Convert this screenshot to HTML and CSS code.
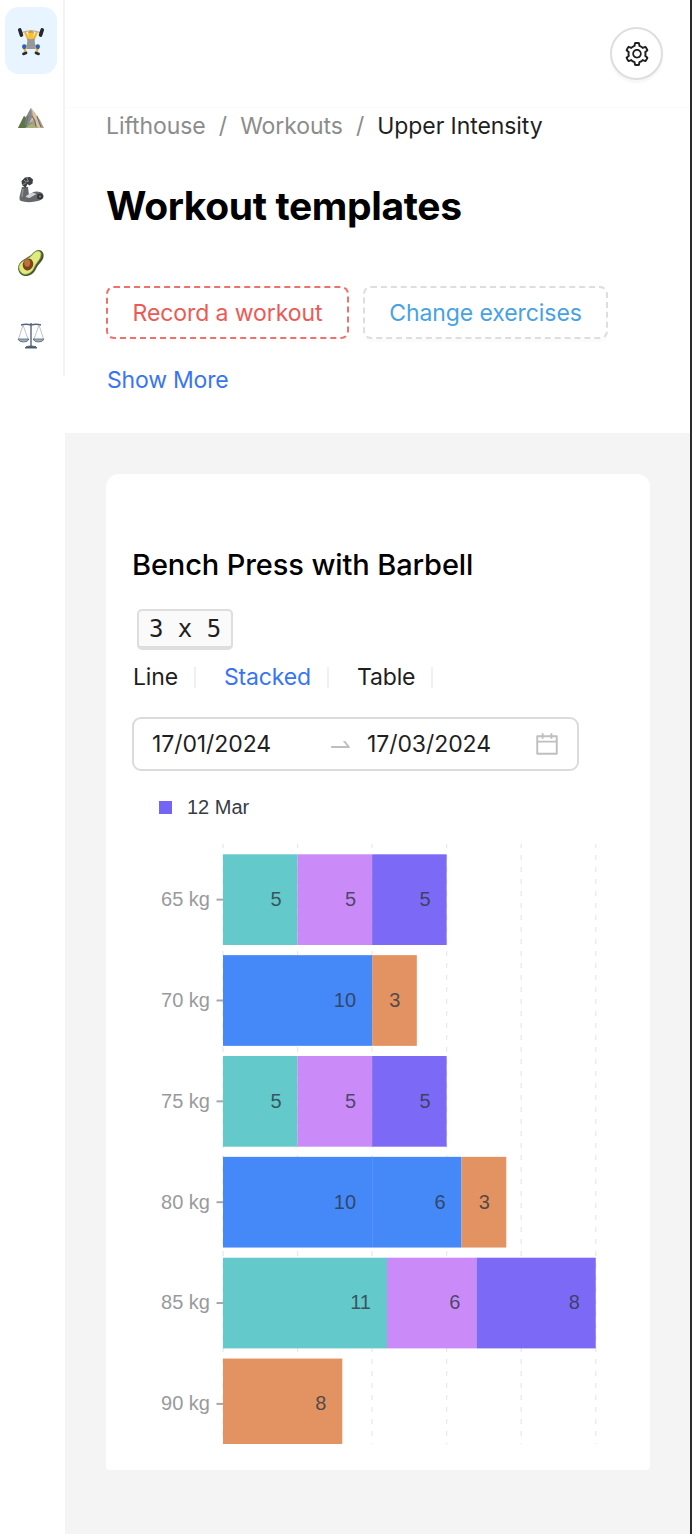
FILE: index.html
```html
<!DOCTYPE html>
<html lang="en">
<head>
<meta charset="utf-8">
<title>Lifthouse – Workout templates</title>
<link rel="stylesheet" href="styles.css">
</head>
<body>
<div class="app">
  <nav class="sidebar">
    <a class="nav-item active"><svg width="28" height="30" viewBox="0 0 28 30">
      <path d="M5 6.500Q14 3 23 6.500" fill="none" stroke="#a3a7ab" stroke-width="1.100"/>
      <path d="M8 6l3.500 8M20 6l-3.500 8" stroke="#f3b630" stroke-width="2.200"/>
      <path d="M11 19l-4 2 1.500 5M17 19l4 2-1.500 5" fill="none" stroke="#eeb02d" stroke-width="2.400"/>
      <path d="M10.500 12.500h7l.5 6 .8 4.500h-9.600l.8-4.500z" fill="#96989c"/>
      <path d="M7.200 20.300v.8M20.800 20.300v.8" stroke="#2e62ae" stroke-width="4.200" stroke-linecap="round"/>
      <rect x="11.300" y="5" width="5.400" height="8.300" rx="2.500" fill="#f7c136"/><path d="M11.300 7.500q0-3 2.700-3t2.700 3q-2.700-1.300-5.400 0z" fill="#d59a2b"/>
      <rect x="1.800" y="2" width="3.600" height="9" rx="1.700" fill="#26282c" transform="rotate(-18 3.500 6.500)"/><rect x="22.600" y="2" width="3.600" height="9" rx="1.700" fill="#26282c" transform="rotate(18 24.500 6.500)"/>
      <path d="M9 27l-2.500.8M19 27l2.500.8" stroke="#292b30" stroke-width="2.800" stroke-linecap="round"/>
    </svg></a>
    <a class="nav-item peak"><svg width="28" height="24" viewBox="0 0 28 24">
      <path d="M1 21L5 13l2-4 2 1 5-9 4 5 2 3 3 4 4 8z" fill="#b09e84"/>
      <path d="M14 1l-5 9-4 11h9l1-9z" fill="#838a8f"/>
      <path d="M14 1l2 7-4 9 5-5 4 9h3L20 9z" fill="#d8c3a0"/>
      <path d="M15 9l3 5 1 7M20 9l2 6 2 5M11 9l-2 9" fill="none" stroke="#6a6e72" stroke-width="1.100"/>
      <path d="M1 21l4-8 2-4 2 2-1 7 6 3z" fill="#5b7548"/><path d="M8 21l6-4 4 2 4 2z" fill="#a8b272"/>
    </svg></a>
    <a class="nav-item low"><svg width="28" height="28" viewBox="0 0 28 28">
      <path d="M5 11h6l1 8q5-5 11-3 4 1 3.500 5.500Q24 25 18 25.500q-8 1.500-14-.5-2-1-1.500-4z" fill="#65676a"/>
      <path d="M5 9L4.500 5 8 1.500 13 1l3 2.500-.5 4-3 2-2-1.500-2 4z" fill="#3e4043"/><path d="M7 4l2 2 3-1M10 2l1 3M5 9l4-2" stroke="#8c8e91" stroke-width="1" fill="none"/>
      <path d="M6 13l-1 8" stroke="#8e9092" stroke-width="1.500"/>
      <path d="M8.500 21q5-6 11-3l-7 4z" fill="#d4d5d6"/><circle cx="23" cy="20.500" r="3" fill="#34363a"/><circle cx="23" cy="20.500" r="1" fill="#888"/>
    </svg></a>
    <a class="nav-item low"><svg width="28" height="28" viewBox="0 0 28 28">
      <path d="M1 19C2 10 11 10 16 4c4-4 9-4 10.500 1 1 7-5 9-7.500 15-4 9-17 10-18-1z" fill="#485638"/>
      <path d="M1.800 18C3 11 12 11 16 5c4-5 8-3 8 0 0 6-5 8-7 14-4 8-14 9-15.200-1z" fill="#e1ea80" stroke="#91b63c" stroke-width=".8"/>
      <ellipse cx="11" cy="15.500" rx="5.200" ry="6" fill="#7e421c" transform="rotate(20 11 15.500)"/><ellipse cx="10.200" cy="14" rx="3" ry="3.700" fill="#bd713d"/>
    </svg></a>
    <a class="nav-item low"><svg width="28" height="28" viewBox="0 0 28 28" fill="none" stroke="#536579">
      <path d="M4 3Q9 1.500 14 3q5-1.500 10 0M14 1v24" stroke-width="1.400"/><path d="M6 3L1.500 17M6 3l5 14M22 3l-5 14M22 3l4.500 14" stroke="#9daab6" stroke-width=".7"/>
      <path d="M1 17h11q-1 3-5.500 3T1 17zM16 17h11q-1 3-5.500 3T16 17z" fill="#9eb0c1" stroke-width=".8"/><path d="M8 26q0-2 6-2t6 2z" fill="#425262"/>
    </svg></a>
  </nav>
  <main class="main">
    <header class="header">
      <div class="toolbar"><button class="settings" aria-label="Settings"><svg width="24" height="24" viewBox="64 64 896 896" fill="currentColor"><path d="M924.800 625.700l-65.500-56c3.100-19 4.700-38.400 4.700-57.800s-1.600-38.800-4.700-57.800l65.500-56a32.030 32.030 0 009.300-35.200l-.9-2.600a443.740 443.740 0 00-79.700-137.900l-1.800-2.100a32.120 32.120 0 00-35.100-9.500l-81.300 28.900c-30-24.600-63.500-44-99.700-57.600l-15.700-85a32.050 32.050 0 00-25.800-25.700l-2.700-.5c-52.100-9.400-106.900-9.400-159 0l-2.700.5a32.050 32.050 0 00-25.800 25.700l-15.800 85.400a351.860 351.860 0 00-99 57.400l-81.900-29.100a32 32 0 00-35.100 9.500l-1.800 2.100a446.020 446.020 0 00-79.700 137.900l-.9 2.600c-4.500 12.500-.8 26.500 9.300 35.200l66.300 56.600c-3.100 18.800-4.600 38-4.600 57.100 0 19.200 1.500 38.400 4.600 57.100L99 625.500a32.030 32.030 0 00-9.300 35.200l.9 2.600c18.100 50.400 44.900 96.900 79.700 137.900l1.800 2.100a32.120 32.120 0 0035.100 9.500l81.900-29.100c29.800 24.500 63.100 43.900 99 57.400l15.800 85.400a32.050 32.050 0 0025.800 25.700l2.700.5a449.400 449.400 0 00159 0l2.700-.5a32.050 32.050 0 0025.800-25.700l15.700-85a350 350 0 0099.700-57.600l81.300 28.900a32 32 0 0035.100-9.500l1.800-2.100c34.800-41.100 61.600-87.500 79.700-137.900l.9-2.600c4.500-12.300.8-26.300-9.300-35zM788.300 465.900c2.500 15.100 3.800 30.600 3.800 46.100s-1.300 31-3.800 46.100l-6.600 40.100 74.700 63.900a370.030 370.030 0 01-42.600 73.600L721 702.800l-31.400 25.800c-23.900 19.600-50.500 35-79.300 45.800l-38.100 14.300-17.900 97a377.500 377.500 0 01-85 0l-17.900-97.200-37.800-14.500c-28.500-10.800-55-26.200-78.700-45.700l-31.400-25.900-93.400 33.200c-17-22.900-31.200-47.600-42.600-73.600l75.500-64.500-6.500-40c-2.400-14.900-3.700-30.300-3.700-45.500 0-15.300 1.200-30.600 3.700-45.500l6.500-40-75.500-64.500c11.300-26.100 25.600-50.700 42.600-73.600l93.400 33.200 31.400-25.900c23.700-19.500 50.200-34.900 78.700-45.700l37.900-14.300 17.900-97.200c28.100-3.200 56.800-3.200 85 0l17.900 97 38.100 14.300c28.700 10.800 55.400 26.200 79.300 45.800l31.400 25.800 92.800-32.900c17 22.900 31.200 47.600 42.600 73.600L781.800 426l6.500 39.900zM512 326c-97.200 0-176 78.800-176 176s78.800 176 176 176 176-78.800 176-176-78.800-176-176-176zm79.200 255.200A111.600 111.600 0 01512 614c-29.900 0-58-11.700-79.200-32.800A111.600 111.600 0 01400 502c0-29.900 11.700-58 32.800-79.200C454 401.600 482.100 390 512 390c29.900 0 58 11.600 79.200 32.800A111.600 111.600 0 01624 502c0 29.900-11.700 58-32.800 79.200z"/></svg></button></div>
      <div class="breadcrumb"><span>Lifthouse</span><i>/</i><span>Workouts</span><i>/</i><span class="current">Upper Intensity</span></div>
      <h1 class="title">Workout templates</h1>
      <div class="actions"><button class="btn danger">Record a workout</button><button class="btn info">Change exercises</button></div>
      <a class="more">Show More</a>
    </header>
    <section class="content">
      <article class="card">
        <h2 class="exercise">Bench Press with Barbell</h2>
        <kbd class="sets">3 x 5</kbd>
        <div class="tabs"><a>Line</a><hr><a class="selected">Stacked</a><hr><a>Table</a><hr></div>
        <div class="range"><span class="date">17/01/2024</span><svg class="arrow" width="23" height="23" viewBox="64 64 896 896"><path fill="currentColor" d="M873.100 596.200l-164-208A32 32 0 00684 376h-64.800c-6.700 0-10.400 7.700-6.300 13l144.300 183H152c-4.400 0-8 3.600-8 8v60c0 4.400 3.600 8 8 8h695.900c26.800 0 41.700-30.800 25.200-51.800z"/></svg><span class="date end">17/03/2024</span><svg class="calendar" width="24" height="24" viewBox="64 64 896 896"><path fill="currentColor" d="M880 184H712v-64c0-4.400-3.600-8-8-8h-56c-4.400 0-8 3.600-8 8v64H384v-64c0-4.400-3.600-8-8-8h-56c-4.400 0-8 3.600-8 8v64H144c-17.700 0-32 14.300-32 32v664c0 17.700 14.300 32 32 32h736c17.700 0 32-14.300 32-32V216c0-17.700-14.300-32-32-32zm-40 656H184V460h656v380zM184 392V256h128v48c0 4.400 3.600 8 8 8h56c4.400 0 8-3.600 8-8v-48h256v48c0 4.400 3.600 8 8 8h56c4.400 0 8-3.600 8-8v-48h128v136H184z"/></svg></div>
        <div class="legend"><b class="swatch"></b><span>12 Mar</span></div>
        <svg class="chart" id="chart" width="491" height="604" viewBox="132 840 491 604"></svg>
      </article>
    </section>
  </main>
</div>
<script src="chart.js"></script>
</body>
</html>
```
FILE: chart.js
```js
const NS = 'http://www.w3.org/2000/svg';
const chart = document.getElementById('chart');
const colors = { teal: '#63c9ca', pink: '#ca8af8', violet: '#7c6af6', blue: '#4588f7', orange: '#e39362' };
const rows = [
  ['65 kg', [[5, 'teal'], [5, 'pink'], [5, 'violet']]],
  ['70 kg', [[10, 'blue'], [3, 'orange']]],
  ['75 kg', [[5, 'teal'], [5, 'pink'], [5, 'violet']]],
  ['80 kg', [[10, 'blue'], [6, 'blue'], [3, 'orange']]],
  ['85 kg', [[11, 'teal'], [6, 'pink'], [8, 'violet']]],
  ['90 kg', [[8, 'orange']]]
];
const left = 223, unit = 14.91, top0 = 854.3, pitch = 100.85, barHeight = 90.7;

function add(tag, attrs, text) {
  const el = document.createElementNS(NS, tag);
  for (const key in attrs) el.setAttribute(key, attrs[key]);
  if (text !== undefined) el.textContent = text;
  chart.appendChild(el);
}

for (let v = 0; v <= 25; v += 5) {
  const x = left + v * unit;
  add('line', { x1: x, x2: x, y1: 1444, y2: 844, class: 'grid' });
}
rows.forEach(([label, values], i) => {
  const y = top0 + i * pitch;
  const mid = y + barHeight / 2;
  let x = left;
  add('text', { x: 210, y: mid + 6.3, class: 'axis-label' }, label);
  add('line', { x1: 216.5, x2: 223, y1: mid, y2: mid, class: 'tick' });
  values.forEach(([value, color]) => {
    const w = value * unit;
    add('rect', { x, y, width: w, height: barHeight, fill: colors[color] });
    add('text', { x: value === 3 ? x + w / 2 + 6 : x + w - 16, y: mid + 6.3, class: 'value' }, value);
    x += w;
  });
});
```
FILE: styles.css
```css
* { box-sizing: border-box; }
body { margin: 0; background: #fff; font-family: Inter, "Noto Sans", sans-serif; color: #1f1f1f; font-size: 23px; letter-spacing: -.08px; }
button { font: inherit; letter-spacing: inherit; background: #fff; padding: 0; }
svg { display: block; flex: none; }
.app { display: flex; width: 692px; height: 1534px; border-right: 2px solid #292b2d; overflow: hidden; }
.sidebar { width: 65px; height: 376px; flex: none; border-right: 2px solid #f3f3f3; padding: 7px 6px 0 5px; }
.nav-item { display: flex; align-items: center; justify-content: center; width: 52px; height: 67px; margin-bottom: 6px; border-radius: 14px; }
.active { background: #e8f4ff; }
.peak { padding-top: 11px; }
.low { padding-top: 7px; }
.main { flex: 1; min-width: 0; }
.header { height: 433px; padding: 0 27px 0 41px; display: flex; flex-direction: column; align-items: flex-start; }
.toolbar { height: 108px; align-self: stretch; display: flex; justify-content: flex-end; padding-top: 27px; border-bottom: 1px solid #fbfbfb; margin-left: -41px; margin-right: -27px; padding-right: 27px; }
.settings { width: 53px; height: 53px; border: 2px solid #dedede; border-radius: 50%; display: flex; align-items: center; justify-content: center; box-shadow: 0 3px 2px #f7f7f7; color: #1f1f1f; }
.breadcrumb { display: flex; line-height: 36px; color: #8c8c8c; white-space: nowrap; }
.breadcrumb i { font-style: normal; width: 34.500px; text-align: center; }
.breadcrumb .current { color: #1f1f1f; }
.title { margin: 35px 0 0; font-size: 39px; line-height: 54px; font-weight: 700; letter-spacing: -.370px; color: #000; white-space: nowrap; }
.actions { display: flex; gap: 14px; margin-top: 53px; }
.btn { width: 243px; height: 53px; border: 2px dashed #f0706b; border-radius: 8px; white-space: nowrap; box-shadow: 0 3px 0 #fbfbfb; }
.danger { color: #ed5a55; }
.info { width: 245px; color: #47a2e4; border-color: #dedede; }
.more { margin: 23px 0 0 1px; line-height: 36px; color: #3875f6; letter-spacing: -.2px; }
.content { height: 1101px; background: #f4f4f4; padding: 41px 40px 0 41px; }
.card { height: 996px; background: #fff; border-radius: 13px 13px 4px 4px; padding: 71px 26px 0; display: flex; flex-direction: column; align-items: flex-start; }
.exercise { margin: 0; font-size: 29px; line-height: 40px; font-weight: 500; color: #000; letter-spacing: -.110px; white-space: nowrap; }
.sets { margin: 24px 0 0 5px; width: 96px; height: 41px; border: 2px solid #dedede; border-bottom-width: 4px; border-radius: 5px; background: #fafafa; font: 24px/37px "DejaVu Sans Mono", monospace; letter-spacing: 0; text-align: center; }
.tabs { display: flex; align-items: center; height: 36px; margin: 9px 0 0 1px; letter-spacing: -.15px; }
.tabs hr { width: 2px; height: 21px; border: 0; background: #f0f0f0; margin: 0 28px 0 16px; }
.selected { color: #3875f6; }
.range { width: 447px; height: 54px; margin-top: 22px; border: 2px solid #dbdbdb; border-radius: 9px; display: flex; align-items: center; padding: 0 18px; color: #bfbfbf; }
.date { color: #1f1f1f; width: 177px; }
.date.end { width: 168px; margin-left: 15px; }
.legend { display: flex; align-items: center; gap: 15px; height: 30px; margin: 21px 0 0 27px; font: 20px "Liberation Sans", sans-serif; letter-spacing: 0; color: #373b45; }
.swatch { width: 13px; height: 13px; background: #7565f6; }
.chart { margin-top: 18px; font: 20px "Liberation Sans", sans-serif; letter-spacing: 0; }
.grid { stroke: #e9e9e9; stroke-width: 1.300; stroke-dasharray: 5 7; stroke-dashoffset: 4; }
.axis-label { fill: #999a9d; text-anchor: end; }
.tick { stroke: #a7a7a7; stroke-width: 2; }
.value { fill: #2c3542; fill-opacity: .8; text-anchor: end; }
```
